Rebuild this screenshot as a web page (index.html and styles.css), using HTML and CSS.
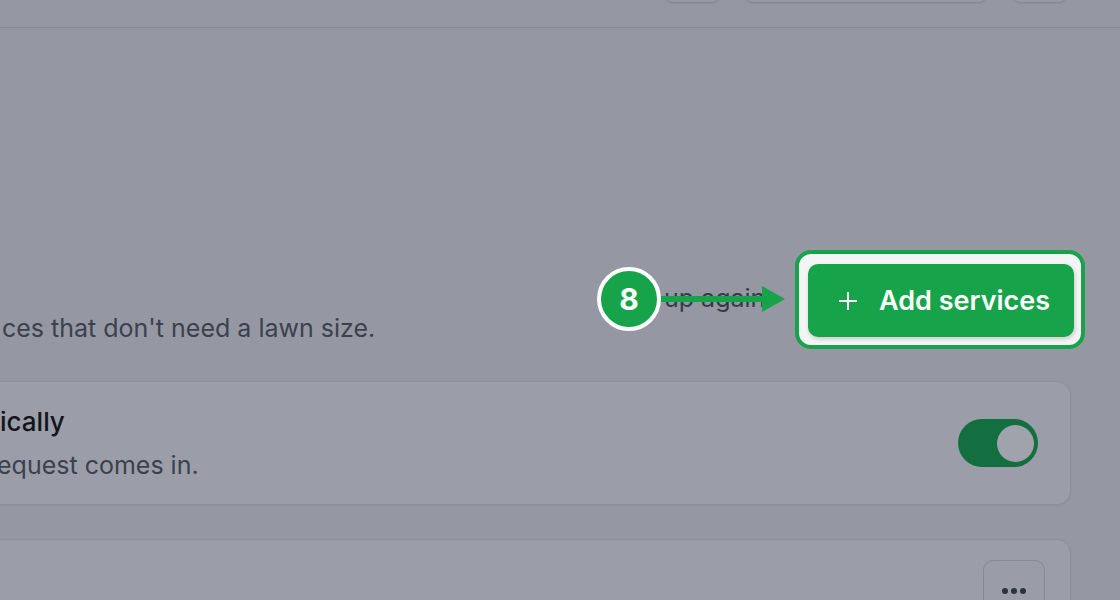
FILE: index.html
```html
<!DOCTYPE html>
<html lang="en">
<head>
<meta charset="utf-8">
<title>Services</title>
<link rel="stylesheet" href="styles.css">
</head>
<body>
<header class="topbar">
  <div class="top-btn top-btn-sm"></div>
  <div class="top-btn top-btn-lg"></div>
  <div class="top-btn top-btn-sm"></div>
</header>
<main class="content">
  <section class="section-head">
    <div class="section-text">
      <div class="line-clip">up again</div>
      <p class="desc">ces that don't need a lawn size.</p>
    </div>
    <div class="tour">
      <div class="tour-badge">8</div>
      <svg class="tour-arrow" width="126" height="28" viewBox="0 0 126 28">
        <rect x="0" y="11" width="106" height="6" fill="#16a34a"/>
        <polygon points="103,1 126,14 103,27" fill="#16a34a"/>
      </svg>
      <div class="spotlight">
        <button class="add-btn">
          <svg class="plus" width="20" height="20" viewBox="0 0 20 20"><path d="M10 1v18M1 10h18" stroke="#fff" stroke-width="2" fill="none"/></svg>
          <span>Add services</span>
        </button>
      </div>
    </div>
  </section>
  <div class="card card-row">
    <div class="card-text">
      <div class="card-title">ically</div>
      <div class="card-sub cut">equest comes in.</div>
    </div>
    <div class="toggle"><div class="knob"></div></div>
  </div>
  <div class="card card-second">
    <div class="more-btn"><span></span><span></span><span></span></div>
  </div>
</main>
</body>
</html>
```

FILE: styles.css
```css
* { box-sizing: border-box; }
html, body { margin: 0; padding: 0; }
body {
  background: #9598a3;
  font-family: Inter, "Noto Sans", "Liberation Sans", sans-serif;
  width: 1120px;
  height: 600px;
  overflow: hidden;
}
.topbar {
  height: 28px;
  border-bottom: 1px solid #888b96;
  display: flex;
  justify-content: flex-end;
  align-items: flex-end;
  padding: 0 53px 24px 0;
  gap: 25px;
  box-shadow: 0 1px 2px rgba(0,0,0,0.04);
}
.top-btn {
  height: 40px;
  flex: none;
  border: 1px solid #858893;
  border-radius: 8px;
  background: #979aa5;
  box-shadow: 0 1px 2px rgba(0,0,0,0.06);
}
.top-btn-sm { width: 55px; }
.top-btn-lg { width: 242px; }

.content { padding-top: 222px; }
.section-head {
  display: flex;
  align-items: flex-start;
  padding-right: 35px;
}
.section-text {
  flex: 1;
  padding-top: 33px;
  color: #3c414d;
  font-size: 25px;
  line-height: 30px;
}
.line-clip {
  margin-left: 664px;
  width: 106px;
  overflow: hidden;
  white-space: nowrap;
  color: #363a46;
}
.desc { margin: 0 0 0 2px; white-space: nowrap; }

.tour { position: relative; }
.tour-badge {
  position: absolute;
  left: -198px;
  top: 17px;
  width: 64px;
  height: 64px;
  border-radius: 50%;
  border: 4px solid #fff;
  background: #16a34a;
  color: #fff;
  font-weight: 700;
  font-size: 30px;
  display: flex;
  align-items: center;
  justify-content: center;
  z-index: 2;
}
.tour-arrow {
  position: absolute;
  left: -136px;
  top: 35px;
  z-index: 1;
}
.spotlight {
  width: 290px;
  height: 99px;
  border: 4px solid #16a34a;
  border-radius: 16px;
  background: #f3f5f4;
  padding: 10px 7px 8px 9px;
  display: flex;
}
.add-btn {
  flex: 1;
  border: none;
  border-radius: 10px;
  background: #16a34a;
  color: #fff;
  font-family: inherit;
  font-size: 27px;
  font-weight: 600;
  display: flex;
  align-items: center;
  gap: 21px;
  padding: 0 0 0 30px;
  box-shadow: 1px 2px 4px rgba(0,0,0,0.18);
}
.plus { flex: none; }

.card {
  margin: 0 49px 0 -20px;
  background: #9b9ea8;
  border: 1px solid #8d909b;
  border-radius: 14px;
  box-shadow: 0 1px 3px rgba(0,0,0,0.05);
}
.card-row {
  margin-top: 32px;
  height: 124px;
  display: flex;
  align-items: center;
  padding: 0 32px 0 19px;
}
.card-text { flex: 1; }
.card-title {
  font-size: 26px;
  font-weight: 500;
  line-height: 30px;
  color: #12151d;
}
.card-sub {
  margin-top: 13px;
  font-size: 25px;
  line-height: 30px;
  color: #3c414d;
}
.cut { margin-left: -3px; }
.toggle {
  width: 80px;
  height: 48px;
  border-radius: 24px;
  background: #136f3f;
  display: flex;
  align-items: center;
  justify-content: flex-end;
  padding-right: 4px;
}
.knob {
  width: 37px;
  height: 37px;
  border-radius: 50%;
  background: #a0a3ab;
}
.card-second {
  margin-top: 34px;
  height: 120px;
  display: flex;
  justify-content: flex-end;
  align-items: flex-start;
  padding: 20px 25px 0 0;
}
.more-btn {
  width: 62px;
  height: 62px;
  border: 1px solid #878a95;
  border-radius: 10px;
  background: #9a9da7;
  display: flex;
  justify-content: center;
  align-items: center;
  gap: 3px;
}
.more-btn span {
  width: 6px;
  height: 6px;
  border-radius: 50%;
  background: #2e323c;
}
```
